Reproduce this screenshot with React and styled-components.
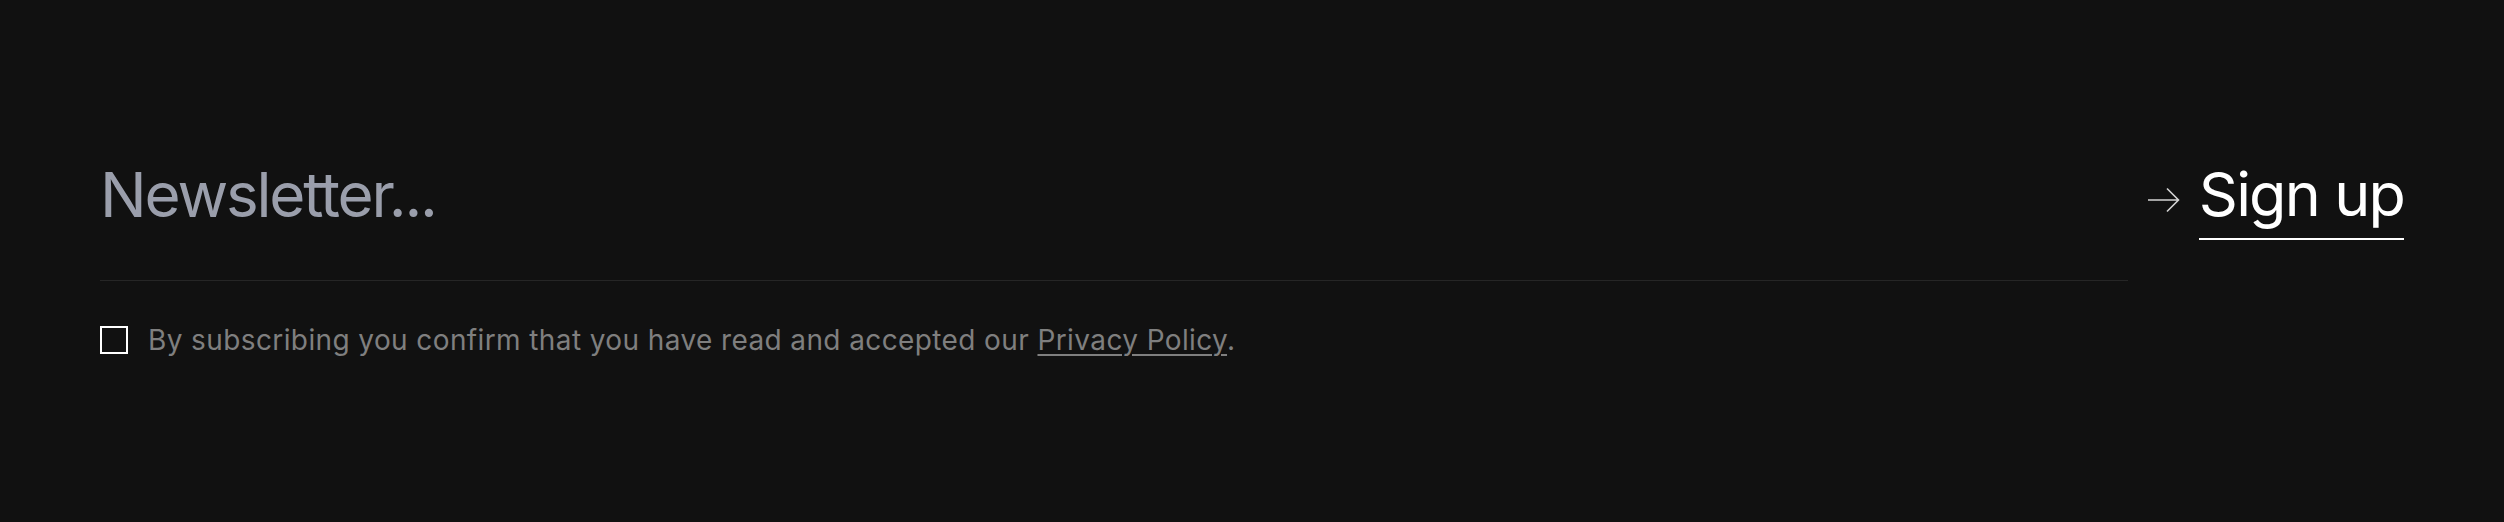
import React from "react";
import styled, { createGlobalStyle } from "styled-components";

const GlobalStyle = createGlobalStyle`
  html, body {
    margin: 0;
    padding: 0;
    background: #111111;
  }
  body {
    font-family: Inter, "Noto Sans", sans-serif;
  }
`;

const Section = styled.section`
  box-sizing: border-box;
  width: 100%;
  height: 522px;
  background: #111111;
  padding: 164px 100px 0;
`;

const Form = styled.form`
  display: flex;
  align-items: flex-start;
  gap: 20px;
`;

const Field = styled.div`
  flex: 1;
  display: flex;
  flex-direction: column;
`;

const Input = styled.input`
  display: block;
  width: 100%;
  box-sizing: border-box;
  margin: 0;
  padding: 0 0 55px 0;
  height: 117px;
  background: transparent;
  border: none;
  border-bottom: 1px solid #262626;
  outline: none;
  font-family: Inter, sans-serif;
  font-size: 62px;
  line-height: 62px;
  letter-spacing: -0.035em;
  color: #ffffff;
  &::placeholder {
    color: #9a9eab;
    opacity: 1;
  }
`;

const Consent = styled.label`
  display: flex;
  align-items: center;
  gap: 20px;
  margin-top: 45px;
  font-family: Inter, sans-serif;
  font-size: 28px;
  line-height: 28px;
  letter-spacing: 0.014em;
  color: #7f7f7f;
`;

const Box = styled.span`
  box-sizing: border-box;
  width: 28px;
  height: 28px;
  flex: none;
  border: 2px solid #ffffff;
`;

const PolicyLink = styled.a`
  color: #7f7f7f;
  text-decoration: underline;
  text-decoration-thickness: 2px;
  text-underline-offset: 4px;
`;

const Submit = styled.button`
  display: flex;
  align-items: flex-start;
  gap: 19px;
  background: none;
  border: none;
  padding: 0;
  margin: 0;
  cursor: pointer;
  flex: none;
`;

const ArrowWrap = styled.span`
  display: flex;
  align-items: center;
  height: 72px;
  color: #d4d4d4;
`;

const Label = styled.span`
  display: inline-block;
  font-family: Inter, sans-serif;
  font-size: 61px;
  line-height: 61px;
  letter-spacing: -0.03em;
  color: #ffffff;
  padding-bottom: 13px;
  border-bottom: 2px solid #ffffff;
  white-space: nowrap;
`;

function Arrow() {
  return (
    <svg width="32" height="26" viewBox="0 0 32 26" fill="none">
      <path
        d="M0 13 H30 M19 1.5 L30.5 13 L19 24.5"
        stroke="currentColor"
        strokeWidth="1.6"
      />
    </svg>
  );
}

export default function App() {
  return (
    <>
      <GlobalStyle />
      <Section>
        <Form onSubmit={(e) => e.preventDefault()}>
          <Field>
            <Input type="email" placeholder="Newsletter..." />
            <Consent>
              <Box />
              <span>
                By subscribing you confirm that you have read and accepted our{" "}
                <PolicyLink href="#">Privacy Policy</PolicyLink>.
              </span>
            </Consent>
          </Field>
          <Submit type="submit">
            <ArrowWrap>
              <Arrow />
            </ArrowWrap>
            <Label>Sign up</Label>
          </Submit>
        </Form>
      </Section>
    </>
  );
}
